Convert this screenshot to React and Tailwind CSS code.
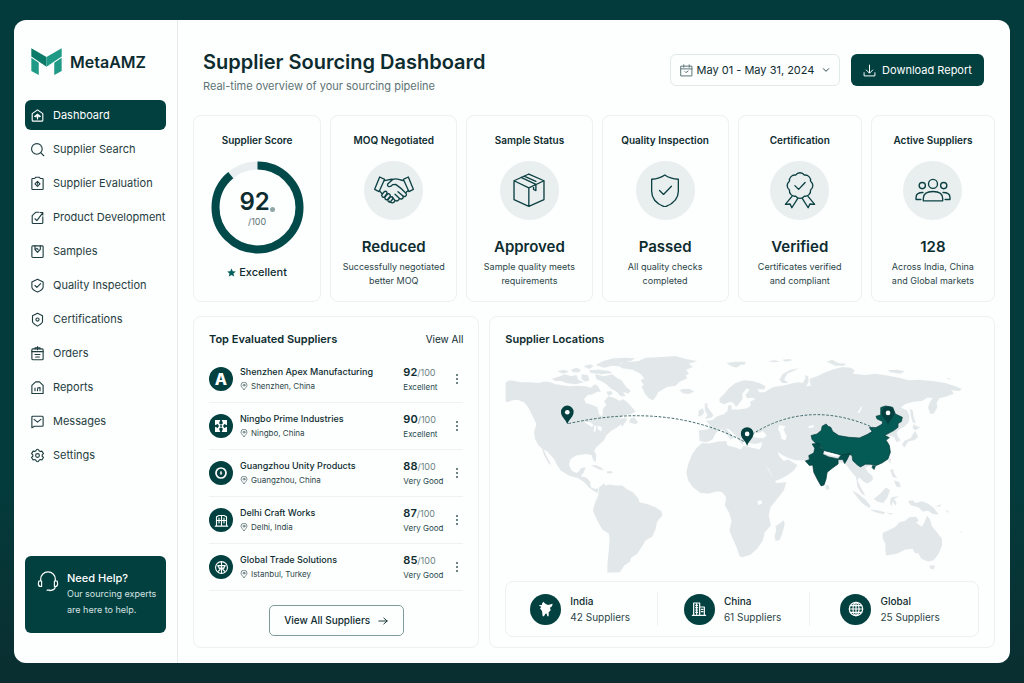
import { useState } from 'react'

const NAV_ITEMS = [
    { label: "Dashboard", icon: <><path d="M3.500 9 12 3l8.500 6v10.500a1.500 1.500 0 0 1-1.500 1.500H5a1.500 1.500 0 0 1-1.500-1.500z" /><path d="M7.500 13.500 12 10l4.500 3.500M12 11v6.500M9 14h6" /></> },
    { label: "Supplier Search", icon: <><circle cx="11" cy="11" r="8.500" /><path d="m17.500 17.500 4.500 4.500" /></> },
    { label: "Supplier Evaluation", icon: <><path d="M4 4h3.500L9 2h6l1.500 2H20a1 1 0 0 1 1 1v15.500a1 1 0 0 1-1 1H4a1 1 0 0 1-1-1V5a1 1 0 0 1 1-1z" /><path d="m12 8.500 4 4-4 4-4-4z" /><path d="M12 12v1" /></> },
    { label: "Product Development", icon: <><path d="M20.500 11v9a1.500 1.500 0 0 1-1.500 1.500H5A1.500 1.500 0 0 1 3.500 20V9l6-5.500h5" /><path d="m8 14 3 3 9-12M16.500 4h4v4" /></> },
    { label: "Samples", icon: <><rect x="3" y="3" width="18" height="18.500" rx="1.500" /><path d="M8 3v6l4 4.500 4.500-5V3M8 9l3-2 2 2" /></> },
    { label: "Quality Inspection", icon: <><path d="m12 2 9 4.500v8c0 3.500-5 6.500-9 8-4-1.500-9-4.500-9-8v-8z" /><path d="m8 12 3 3 6-6" /></> },
    { label: "Certifications", icon: <><path d="m12 2 8 4v9c0 3-5 5.500-8 7.500-3-2-8-4.500-8-7.500V6z" /><circle cx="12" cy="12" r="2.500" /></> },
    { label: "Orders", icon: <><rect x="3" y="4.500" width="18" height="17.500" rx="1.500" /><path d="M3 9h18M8 4.500V3h8v1.500M12 1v5" /><path d="M8 13.500h8M9 17.500h6" /></> },
    { label: "Reports", icon: <><path d="M3 21.500V8.500L9 3h6l6 5.500v13z" /><path d="M8 17v-4M12 17v-2M16 17v-5M12 13l4-1" /></> },
    { label: "Messages", icon: <><path d="M4.500 3.500h15A1.500 1.500 0 0 1 21 5v13a1.500 1.500 0 0 1-1.500 1.500H7L3 22V5a1.500 1.500 0 0 1 1.500-1.500z" /><path d="m6.500 8.500 5.500 4.500 5.500-4.500" /></> },
    { label: "Settings", icon: <><path d="M12 2c2 0 2 .5 2.500 2.500l2 1.200 2.500-.7 2.500 4-2 1.900v2.300l2 1.900-2.500 4-2.500-.7-2 1.200C14 21.500 14 22 12 22s-2-.5-2.500-2.400l-2-1.200-2.500.7-2.500-4 2-1.900v-2.300l-2-1.900 2.500-4 2.500.7 2-1.200C10 2.500 10 2 12 2z" /><circle cx="12" cy="12" r="3" /></> },
]

const STATS = [
    {
        title: "MOQ Negotiated", value: "Reduced", lines: ["Successfully negotiated", "better MOQ"],
        size: "w-10", box: "0 0 120 88",
        icon: <>
            <path d="M17 3 32 10 15 47 2 40zM103 3 88 10l17 37 13-7z" />
            <path d="M31 14c10 0 16-6 26-4M88 14C76 12 68 5 57 10L41 24c-3 9 8 11 15 2l9-1c12 8 24 18 31 27 4 6-2 12-9 8L72 47" />
            <path d="M87 60c3 7-5 12-11 7L63 55M76 67c0 7-8 10-13 6L54 64M63 73c-1 7-9 9-13 6l-3-3M102 44l-7 6M18 46l7 8" />
            <path d="M25 54l5-6c5-5 12 0 8 6l-6 8c-5 5-12-2-7-8zM34 62l6-7c5-4 11 1 8 6l-7 9c-5 4-11-2-7-8zM43 70l6-7c5-3 10 1 7 6l-6 8c-5 4-11-2-7-7z" />
        </>,
    },
    {
        title: "Sample Status", value: "Approved", lines: ["Sample quality meets", "requirements"],
        size: "w-8", box: "-2 -2 95 102",
        icon: <path d="M45 1 90 21v56L45 97 1 77V21zM1 21l44 21 45-21M45 42v55M22 11l44 21v18l-7-3V36M31 7l35 16" />,
    },
    {
        title: "Quality Inspection", value: "Passed", lines: ["All quality checks", "completed"],
        size: "w-7", box: "-1 -2 85 103",
        icon: <><path d="M41 1C30 9 16 13 1 14v36c0 24 19 40 40 48 21-8 41-24 41-48V14C66 13 52 9 41 1z" /><path d="m25 48 12 12 24-25" /></>,
    },
    {
        title: "Certification", value: "Verified", lines: ["Certificates verified", "and compliant"],
        size: "w-8", box: "-1 -4 94 108",
        icon: <>
            <path d="M59 5a16 16 0 0 1 18 18 16 16 0 0 1 0 26 16 16 0 0 1-18 18 16 16 0 0 1-26 0 16 16 0 0 1-18-18 16 16 0 0 1 0-26A16 16 0 0 1 33 5a16 16 0 0 1 26 0z" />
            <path d="m31 36 11 11 19-20M23 67 3 91l14-1 5 11 17-27M69 67l20 24-14-1-5 11-17-27" />
        </>,
    },
    {
        title: "Active Suppliers", value: "128", lines: ["Across India, China", "and Global markets"],
        size: "w-9", box: "0 -2 104 70",
        icon: <>
            <circle cx="52" cy="15" r="13" /><circle cx="21" cy="20" r="9" /><circle cx="83" cy="20" r="9" />
            <path d="M24 64v-7c0-14 12-20 28-20s28 6 28 20v7zM17 60H3v-6c0-9 7-14 20-14M87 60h14v-6c0-9-7-14-20-14" />
        </>,
    },
]

const SUPPLIERS = [
    { name: "Shenzhen Apex Manufacturing", place: "Shenzhen, China", score: 92, grade: "Excellent", logo: "apex" },
    { name: "Ningbo Prime Industries", place: "Ningbo, China", score: 90, grade: "Excellent", logo: "prime" },
    { name: "Guangzhou Unity Products", place: "Guangzhou, China", score: 88, grade: "Very Good", logo: "unity" },
    { name: "Delhi Craft Works", place: "Delhi, India", score: 87, grade: "Very Good", logo: "craft" },
    { name: "Global Trade Solutions", place: "Istanbul, Turkey", score: 85, grade: "Very Good", logo: "trade" },
]

const REGIONS = [
    {
        name: "India", count: 42, pad: "pl-6",
        icon: <path fill="currentColor" stroke="none" d="m8 1 3 3 4 2 7-2-1 4-3 2 1 4-3 3v6h-2l-1-4h-2l-2 4H7l-1-8-3-4 2-2-4-3h5V4z" />,
    },
    {
        name: "China", count: 61, pad: "pl-[26px]",
        icon: <><path d="M4 21V3h9v18M13 9h7v12M2 21.500h20" /><path d="M7 6.500h3M7 10h3M7 13.500h3M7 17h3M15.500 12.500h2.500M15.500 16h2.500M8.500 4v16" /></>,
    },
    {
        name: "Global", count: 25, pad: "pl-[30px]",
        icon: <><circle cx="12" cy="12" r="10" /><ellipse cx="12" cy="12" rx="4.500" ry="10" /><path d="M2 12h20M3.500 7h17M3.500 17h17M12 2v20" /></>,
    },
]

const LAND = [
    // north america
    "M50 130 62 124 78 126 95 130 120 130 150 132 162 128 180 128 200 136 215 138 240 142 268 140 290 142 305 146 318 136 326 140 336 158 325 158 312 166 296 168 286 180 290 192 310 198 325 205 331 228 340 232 343 208 352 199 346 186 354 176 360 172 378 178 392 186 402 180 415 190 432 208 440 218 425 226 405 230 390 240 412 236 414 244 405 255 400 264 396 256 385 265 368 275 352 290 345 305 322 325 316 335 322 350 320 370 312 362 308 348 290 345 262 350 245 360 240 378 248 395 262 402 270 398 275 388 290 384 285 400 275 412 292 416 303 428 306 445 318 450 328 448 326 462 314 456 300 446 286 430 268 418 240 410 215 395 205 380 195 360 175 338 164 332 172 350 187 378 178 372 165 348 160 330 148 318 138 300 135 280 142 255 135 240 128 226 118 206 105 190 85 182 70 184 60 188 50 188z",
    // arctic islands and newfoundland
    "M320 78 345 65 375 58 410 56 440 58 425 66 395 72 388 82 370 80 345 86z",
    "M318 105 345 112 370 106 385 118 398 124 410 142 425 155 418 164 402 158 410 172 395 172 385 160 365 148 352 136 340 128 322 120z",
    "M188 120 212 112 228 106 248 112 262 108 268 122 285 130 260 136 230 132 218 126 200 126z",
    "M205 96 226 92 240 98 222 104zM246 92 262 86 276 92 270 100 252 100zM278 106 296 108 302 124 288 128 278 120z",
    "M284 82 304 76 314 82 300 90zM300 94 330 92 362 96 370 102 338 106 306 102zM352 158 366 156 372 164 358 170z",
    "M425 238 436 236 448 250 440 256 420 250z",
    // caribbean
    "M305 380 320 378 336 386 346 394 330 392 316 384zM352 398 368 396 372 402 356 404z",
    // greenland, iceland, svalbard
    "M385 78 405 70 425 68 450 66 470 56 520 54 560 51 590 60 625 66 600 74 612 84 592 92 600 104 590 110 596 118 572 128 560 140 535 144 520 152 508 160 502 172 492 184 480 178 468 164 458 142 465 138 455 124 466 118 455 104 430 92 400 88z",
    "M572 154 582 150 604 150 616 158 600 165 582 163z",
    "M712 72 740 68 768 68 760 76 742 86 728 82z",
    // south america
    "M330 446 345 434 350 440 362 437 380 440 400 440 415 452 432 460 448 478 452 490 475 495 500 505 518 518 520 530 505 548 500 572 490 594 470 605 460 622 445 645 425 658 424 668 406 680 400 690 392 700 355 702 356 670 360 630 362 600 360 585 340 572 330 555 318 530 312 515 318 492 328 470z",
    // britain and ireland
    "M648 193 656 194 656 204 666 218 674 230 668 236 648 240 656 228 648 214z",
    "M630 214 642 208 646 220 640 230 628 232z",
    // europe and asia
    "M630 274 655 272 666 264 656 250 650 246 672 243 685 232 705 226 716 216 718 200 728 198 728 212 750 212 775 208 786 200 784 188 800 180 790 176 774 178 770 168 782 152 774 148 760 165 762 178 754 190 742 204 734 192 724 188 706 196 692 190 692 178 706 165 720 148 740 132 765 124 790 126 812 132 830 142 826 152 806 150 812 160 828 160 842 150 855 144 880 140 900 136 914 132 930 130 942 132 950 118 948 108 958 112 960 128 952 142 966 140 962 120 985 112 1000 104 1030 92 1060 84 1086 86 1098 94 1092 104 1130 108 1160 104 1200 110 1230 116 1260 124 1290 122 1330 126 1370 132 1400 142 1420 150 1412 156 1388 154 1396 164 1375 172 1352 178 1344 192 1346 206 1335 224 1325 225 1318 206 1324 190 1332 176 1315 176 1300 186 1275 188 1250 195 1236 206 1255 215 1262 230 1260 250 1248 262 1232 272 1224 280 1228 294 1236 304 1224 310 1216 294 1200 290 1190 300 1200 310 1205 335 1195 360 1170 378 1140 382 1130 386 1138 400 1152 412 1152 424 1136 434 1124 428 1112 416 1106 424 1116 445 1130 470 1120 466 1106 444 1102 415 1085 395 1070 375 1055 370 1045 378 1025 395 1010 410 1008 430 1000 440 990 430 978 405 970 380 955 372 945 364 920 364 900 358 880 348 866 338 872 352 885 366 898 362 912 370 926 378 915 395 895 410 875 420 858 427 850 410 840 390 825 370 812 350 810 338 818 322 820 310 800 315 780 312 768 305 765 295 762 318 752 306 740 290 722 272 712 268 724 284 736 296 726 302 712 284 700 272 690 274 680 284 672 300 660 308 650 310 632 306z",
    // africa and madagascar
    "M640 312 660 314 690 308 712 306 716 320 740 326 755 332 765 320 785 326 815 332 822 355 835 385 852 415 862 432 893 430 885 455 865 480 845 505 840 530 846 560 828 580 822 605 805 630 785 648 760 655 752 652 745 630 732 600 722 575 728 545 720 520 708 500 712 475 700 460 688 457 660 464 635 462 612 445 598 425 592 400 598 375 610 345 625 325z",
    "M860 562 876 552 884 544 888 556 880 585 872 604 860 606 857 592 862 576z",
    // russian arctic
    "M872 122 882 105 905 92 930 88 915 96 895 104 886 122 900 132 880 132z",
    "M1014 68 1030 62 1048 72 1072 74 1066 80 1040 80zM1196 94 1225 92 1248 97 1235 104 1206 100zM840 66 860 64 874 68 850 70zM880 62 902 60 912 64 890 68zM1372 118 1384 118 1382 122zM744 70 772 70 766 78z",
    // japan and sakhalin
    "M1264 210 1272 214 1276 238 1282 254 1272 250 1266 228zM1274 256 1294 266 1280 274 1272 268zM1280 276 1288 294 1276 304 1258 308 1248 326 1240 318 1246 306 1266 298 1274 284z",
    // south east asia
    "M1202 358 1208 360 1204 374 1199 366zM1204 392 1214 392 1216 404 1226 418 1212 414zM1216 424 1232 430 1236 446 1222 442zM1012 438 1020 440 1022 450 1014 454 1010 446z",
    "M1090 455 1105 462 1130 482 1145 500 1142 508 1120 492 1105 475zM1142 512 1165 514 1190 520 1184 526 1160 520zM1194 522 1214 524 1206 528z",
    "M1155 480 1175 464 1192 446 1204 454 1196 476 1184 492 1165 488zM1206 478 1212 474 1232 472 1216 480 1224 492 1220 500 1212 488 1208 504 1204 492z",
    "M1258 486 1272 484 1280 492 1300 487 1320 495 1336 508 1350 526 1334 526 1318 516 1302 518 1290 506 1265 498zM1340 502 1358 496 1354 504zM1370 512 1384 520 1376 520zM1412 576 1422 584 1416 582z",
    // australia and tasmania
    "M1182 582 1205 572 1222 562 1232 550 1250 546 1262 535 1282 534 1290 545 1282 552 1300 564 1308 548 1315 530 1324 542 1330 562 1345 580 1360 600 1360 620 1350 645 1335 664 1318 668 1298 660 1290 645 1278 642 1272 630 1250 632 1225 645 1192 650 1190 635 1190 615 1182 600z",
    "M1322 680 1340 680 1334 692 1326 690z",
]

const WATER = [
    "M784 290 796 280 808 284 822 276 834 290 824 298 800 296z",
    "M872 258 890 262 884 272 894 292 890 304 878 300 874 282 868 270z",
    "M958 262 974 258 976 264 962 268zM1106 222 1118 202 1120 206 1112 222zM806 486 818 484 820 494 808 498z",
    "M284 248 304 250 314 258 308 264 296 256zM316 260 322 262 320 276 314 280zM326 260 340 266 336 278 326 270z",
]

const CHINA = "M1012 255 1018 262 1026 265 1032 278 1050 290 1080 295 1112 297 1135 287 1150 278 1142 266 1162 266 1180 256 1182 248 1165 240 1162 232 1176 228 1176 206 1190 201 1212 205 1220 225 1241 235 1238 248 1228 254 1228 265 1215 275 1198 284 1188 290 1202 296 1192 304 1202 320 1205 340 1198 360 1180 372 1162 380 1145 376 1130 376 1115 384 1106 378 1092 365 1090 350 1080 345 1068 352 1045 345 1025 340 1005 335 992 318 980 312 970 302 967 290 985 285 998 274 1000 262zM1152 380 1160 382 1156 392 1150 386z"
const INDIA = "M970 315 990 313 995 325 1005 335 1002 346 1020 354 1048 360 1056 350 1070 346 1084 343 1076 360 1068 374 1062 362 1048 362 1048 375 1030 388 1015 400 1012 420 1006 438 997 441 985 420 975 400 972 378 962 380 950 366 962 362 960 350 975 342 978 328z"

function StrokeIcon({ className, children }) {
    return (
        <svg viewBox="0 0 24 24" aria-hidden="true" className={className} fill="none" stroke="currentColor"
            strokeWidth="1.8" strokeLinecap="round" strokeLinejoin="round">
            {children}
        </svg>
    )
}

function Logo() {
    return (
        <svg viewBox="0 0 92 82" aria-hidden="true" className="w-[31px]">
            <path fill="#0c7a69" d="M1 1 46 27v29L1 25z" />
            <path fill="#1f9a86" d="M91 1 46 27v29l45-31z" />
            <path fill="#1f9a86" d="M1 29l22 15v36L1 68zM91 29 69 44v36l22-12z" />
        </svg>
    )
}

function SupplierLogo({ type }) {
    if (type === "apex") return <span className="text-base leading-none font-extrabold">A</span>
    if (type === "prime") return (
        <svg viewBox="0 0 24 24" aria-hidden="true" className="w-4 fill-white">
            <path d="M3 3h8l-2 5 3 2 3-2-2-5h8v8l-4-2-2 3 2 3 4-2v8h-8l2-5-3-2-3 2 2 5H3v-8l4 2 2-3-2-3-4 2z" />
            <circle cx="12" cy="12" r="1.500" fill="#02413f" />
        </svg>
    )
    if (type === "unity") return (
        <StrokeIcon className="w-4"><circle cx="12" cy="12" r="7.500" strokeWidth="2.600" /><path d="M12 10v4M11 12h2" /></StrokeIcon>
    )
    if (type === "craft") return (
        <StrokeIcon className="w-[15px]"><path d="M4 21V6l4-2h8l4 2v15zM12 4v17M4 12h16M8 8v8M16 8v8M2 21h20" /></StrokeIcon>
    )
    return (
        <StrokeIcon className="w-[15px]"><circle cx="12" cy="12" r="9.500" /><path d="M12 3v18M6 9h12M8 13h8M6 9l4 6M18 9l-4 6M7 18l3-3M17 18l-3-3" /></StrokeIcon>
    )
}

function Sidebar({ active, onSelect }) {
    return (
        <aside className="w-[164px] shrink-0 border-r border-[#e6ecec] px-[11px] pt-7 pb-[30px] flex flex-col">
            <div className="flex items-center gap-2 pl-[6px]">
                <Logo />
                <span className="text-base leading-7 font-semibold">MetaAMZ</span>
            </div>

            <nav className="mt-6 flex flex-col gap-1">
                {NAV_ITEMS.map(item => (
                    <a
                        key={item.label}
                        href="#"
                        onClick={() => onSelect(item.label)}
                        className={`flex items-center gap-2 h-[30px] pl-[5px] rounded-md text-[11px] whitespace-nowrap
                            ${active === item.label ? 'bg-[#02403f] text-white' : 'text-[#1f3d40]'}`}
                    >
                        <StrokeIcon className="w-[15px] shrink-0">{item.icon}</StrokeIcon>
                        {item.label}
                    </a>
                ))}
            </nav>

            <a href="#" className="mt-auto h-[77px] flex gap-2 rounded-md bg-[#02403f] text-white pl-3 pt-[14px]">
                <StrokeIcon className="w-[22px] h-[22px] shrink-0">
                    <path strokeWidth="1.300" d="M4 12V10a8 8 0 0 1 16 0v2M2 12h3v6H4c-2 0-2.500-1-2.500-3zM22 12h-3v6h1c2 0 2.500-1 2.500-3zM20 18c0 3-2 4-6 4.500M11 22h3" />
                </StrokeIcon>
                <span>
                    <span className="block text-[11px] leading-4 font-medium">Need Help?</span>
                    <span className="block text-[9px] leading-4 text-[#d5e3e2]">Our sourcing experts<br />are here to help.</span>
                </span>
            </a>
        </aside>
    )
}

function Header() {
    return (
        <header className="flex justify-between items-start pl-[10px] pr-[11px]">
            <div>
                <h1 className="text-xl leading-6 font-semibold">Supplier Sourcing Dashboard</h1>
                <p className="mt-1 text-[11px] leading-4 text-[#5c7375]">Real-time overview of your sourcing pipeline</p>
            </div>
            <div className="mt-1 flex gap-[11px] text-[11px]">
                <button className="h-8 w-[170px] flex items-center justify-center rounded-md border border-[#e2e9e9]">
                    <StrokeIcon className="w-[13px] mr-1 text-[#5c7375]">
                        <path d="M2 4h20v18H2zM2 9h20M7 1.500V6M17 1.500V6M9 14l2 2 4-3" />
                    </StrokeIcon>
                    May 01 - May 31, 2024
                    <StrokeIcon className="w-2 ml-2"><path strokeWidth="2.600" d="m4 8 8 8 8-8" /></StrokeIcon>
                </button>
                <button className="h-8 w-[133px] flex items-center justify-center gap-[6px] rounded-md bg-[#02403f] text-white">
                    <StrokeIcon className="w-[13px]"><path d="M12 2v14M6 11l6 6 6-6M2 16v6h20v-6" /></StrokeIcon>
                    Download Report
                </button>
            </div>
        </header>
    )
}

function ScoreCard() {
    return (
        <article className="rounded-lg border border-[#edf1f1] pt-4 pb-3 flex flex-col items-center">
            <h2 className="text-[10px] leading-4 font-semibold">Supplier Score</h2>
            <div className="relative mt-[13px] w-[93px]">
                <svg viewBox="0 0 93 93" aria-hidden="true" fill="none" strokeWidth="8">
                    <circle cx="46.5" cy="46.5" r="42" stroke="#e9eff0" />
                    <circle cx="46.5" cy="46.5" r="42" stroke="#02494a" pathLength="100" strokeDasharray="89 100"
                        transform="rotate(-90 46.5 46.5)" />
                </svg>
                <div className="absolute inset-0 flex flex-col items-center justify-center">
                    <span className="flex items-end">
                        <span className="text-2xl leading-7 font-semibold">92</span>
                        <span className="mb-1 size-[5px] rounded-full bg-[#8fa5a6]" />
                    </span>
                    <span className="text-[9px] leading-3 text-[#5c7375]">/100</span>
                </div>
            </div>
            <p className="mt-[10px] flex items-center gap-[3px] text-[11px] leading-4 font-medium">
                <svg viewBox="0 0 24 24" aria-hidden="true" className="w-[9px] fill-[#04605a]">
                    <path d="m12 1 3.300 7.500 8.200.8-6.200 5.400 1.900 8L12 18.500l-7.200 4.200 1.900-8L.5 9.300l8.200-.8z" />
                </svg>
                Excellent
            </p>
        </article>
    )
}

function StatCard({ stat }) {
    return (
        <article className="rounded-lg border border-[#edf1f1] pt-4 pb-[13px] flex flex-col items-center text-center whitespace-nowrap">
            <h2 className="text-[10px] leading-4 font-semibold">{stat.title}</h2>
            <div className="mt-[13px] size-[59px] rounded-full bg-[#e9efef] flex items-center justify-center text-[#0d4144]">
                <svg viewBox={stat.box} aria-hidden="true" className={stat.size} fill="none" stroke="currentColor"
                    strokeWidth="4" strokeLinecap="round" strokeLinejoin="round">
                    {stat.icon}
                </svg>
            </div>
            <p className="mt-[17px] text-[15px] leading-5 font-semibold">{stat.value}</p>
            <p className="mt-[3px] text-[9px] leading-[14px] text-[#2b4648]">{stat.lines[0]}<br />{stat.lines[1]}</p>
        </article>
    )
}

function SupplierList() {
    return (
        <section className="rounded-lg border border-[#edf1f1] px-[15px] pt-[14px] pb-[10px] flex flex-col">
            <div className="flex justify-between items-center leading-4">
                <h2 className="text-[11px] font-semibold">Top Evaluated Suppliers</h2>
                <a href="#" className="text-[10px]">View All</a>
            </div>
            <ul className="mt-[9px]">
                {SUPPLIERS.map(supplier => (
                    <li key={supplier.name} className="h-[47px] flex items-center border-b border-[#eef2f2]">
                        <div className="size-6 shrink-0 rounded-full bg-[#02413f] text-white flex items-center justify-center">
                            <SupplierLogo type={supplier.logo} />
                        </div>
                        <div className="ml-[7px] flex-1 whitespace-nowrap">
                            <h3 className="text-[9px] leading-[14px] font-medium">{supplier.name}</h3>
                            <p className="flex items-center gap-[3px] text-[8px] leading-[14px] text-[#2b4648]">
                                <StrokeIcon className="w-2"><path d="M12 23C8 18 3 14 3 9.500a9 9 0 0 1 18 0C21 14 16 18 12 23z" /><circle cx="12" cy="9.500" r="3" /></StrokeIcon>
                                {supplier.place}
                            </p>
                        </div>
                        <div className="w-12 whitespace-nowrap">
                            <p className="text-[9px] leading-[14px] text-[#6d8283]">
                                <span className="text-[11px] font-semibold text-[#0d2c2f]">{supplier.score}</span>/100
                            </p>
                            <p className="text-[8px] leading-[14px] text-[#1f4a4b]">{supplier.grade}</p>
                        </div>
                        <button aria-label={`Options for ${supplier.name}`} className="w-3 flex justify-center">
                            <svg viewBox="0 0 4 12" aria-hidden="true" className="w-1 fill-[#3f5b5d]">
                                <circle cx="2" cy="2" r="1" /><circle cx="2" cy="6" r="1" /><circle cx="2" cy="10" r="1" />
                            </svg>
                        </button>
                    </li>
                ))}
            </ul>
            <button className="mt-[14px] self-center w-[135px] h-[31px] flex items-center justify-center gap-2 rounded-[5px] border border-[#7f9a9b] text-[10px] font-medium">
                View All Suppliers
                <StrokeIcon className="w-[10px]"><path strokeWidth="2.200" d="M2 12h20M14 5l8 7-8 7" /></StrokeIcon>
            </button>
        </section>
    )
}

function Pin({ x, y }) {
    return (
        <g transform={`translate(${x} ${y})`}>
            <path fill="#03403f" d="M0 36C-5 20-19 14-19-1a19 19 0 0 1 38 0C19 14 5 20 0 36z" />
            <circle r="7" fill="#fff" />
        </g>
    )
}

function WorldMap() {
    return (
        <svg viewBox="48 36 1422 674" role="img" aria-label="World map of supplier locations" className="w-full">
            <path fill="#e2e8ea" d={LAND.join("")} />
            <path fill="#fdfefe" d={WATER.join("")} />
            <g stroke="#033b3a" strokeWidth="2" strokeLinejoin="round">
                <path fill="#045a55" d={CHINA} />
                <path fill="#034f4c" d={INDIA} />
            </g>
            <path fill="#fdfefe" d="M1006 337 1026 342 1050 348 1052 352 1034 351 1008 343z" />
            <g fill="none" stroke="#3b6566" strokeWidth="3" strokeDasharray="8 5">
                <path d="M238 254Q540 187 770 310" />
                <path d="M790 286Q960 178 1158 268" />
            </g>
            <Pin x={235} y={220} />
            <Pin x={775} y={285} />
            <Pin x={1198} y={222} />
        </svg>
    )
}

function Locations() {
    return (
        <section className="rounded-lg border border-[#edf1f1] px-[15px] pt-[14px] pb-[10px] flex flex-col">
            <h2 className="text-[11px] leading-4 font-semibold">Supplier Locations</h2>
            <div className="mt-1"><WorldMap /></div>
            <ul className="mt-auto h-[56px] rounded-lg border border-[#edf1f1] grid grid-cols-[152fr_153fr_168fr] items-center">
                {REGIONS.map(region => (
                    <li key={region.name} className={`h-[34px] flex items-center gap-[9px] border-r border-[#edf1f1] last:border-r-0 ${region.pad}`}>
                        <div className="size-[31px] rounded-full bg-[#02413f] text-white flex items-center justify-center">
                            <StrokeIcon className="w-4">{region.icon}</StrokeIcon>
                        </div>
                        <div>
                            <h3 className="text-[10px] leading-4 font-medium">{region.name}</h3>
                            <p className="text-[10px] leading-4 text-[#2b4648]">{region.count} Suppliers</p>
                        </div>
                    </li>
                ))}
            </ul>
        </section>
    )
}

function App() {
    const [active, setActive] = useState("Dashboard")

    return (
        <div className="min-h-screen flex px-[14px] py-5 bg-linear-to-b from-[#033b3c] from-70% to-[#0a2e30] text-[#0d2c2f] font-['Inter','Liberation_Sans',sans-serif]">
            <div className="flex-1 flex rounded-xl bg-[#fdfefe]">
                <Sidebar active={active} onSelect={setActive} />

                <main className="flex-1 min-w-0 px-[15px] pt-[30px] pb-[15px] flex flex-col">
                    <Header />

                    {/* Score and status cards */}
                    <div className="mt-[21px] grid grid-cols-[128fr_127fr_126fr_127fr_124fr_124fr] gap-[9px]">
                        <ScoreCard />
                        {STATS.map(stat => <StatCard key={stat.title} stat={stat} />)}
                    </div>

                    <div className="mt-[14px] flex-1 grid grid-cols-[286fr_505fr] gap-[10px]">
                        <SupplierList />
                        <Locations />
                    </div>
                </main>
            </div>
        </div>
    )
}

export default App
